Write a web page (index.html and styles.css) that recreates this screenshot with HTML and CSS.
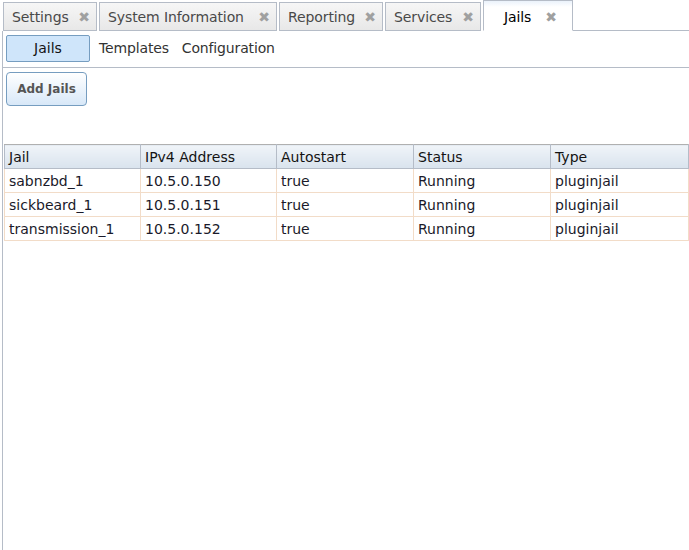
FILE: index.html
```html
<!DOCTYPE html>
<html>
<head>
<meta charset="utf-8">
<link rel="stylesheet" href="styles.css">
</head>
<body>
<div class="app">
  <div class="tabstrip">
    <div class="tab" style="width:94px"><span class="label">Settings</span><span class="close">✖</span></div>
    <div class="tab" style="width:178px"><span class="label">System Information</span><span class="close">✖</span></div>
    <div class="tab" style="width:104px"><span class="label">Reporting</span><span class="close">✖</span></div>
    <div class="tab" style="width:96px"><span class="label">Services</span><span class="close">✖</span></div>
    <div class="tab active" style="width:90px"><span class="label">Jails</span><span class="close">✖</span></div>
    <div class="strip-rest"></div>
  </div>
  <div class="pane">
    <div class="subbar">
      <button class="subtab selected">Jails</button>
      <span class="sublink">Templates</span>
      <span class="sublink">Configuration</span>
    </div>
    <div class="content">
      <button class="action">Add Jails</button>
      <table class="grid">
        <colgroup>
          <col style="width:136px"><col style="width:136px"><col style="width:137px"><col style="width:137px"><col>
        </colgroup>
        <thead>
          <tr><th>Jail</th><th>IPv4 Address</th><th>Autostart</th><th>Status</th><th>Type</th></tr>
        </thead>
        <tbody>
          <tr><td>sabnzbd_1</td><td>10.5.0.150</td><td>true</td><td>Running</td><td>pluginjail</td></tr>
          <tr><td>sickbeard_1</td><td>10.5.0.151</td><td>true</td><td>Running</td><td>pluginjail</td></tr>
          <tr><td>transmission_1</td><td>10.5.0.152</td><td>true</td><td>Running</td><td>pluginjail</td></tr>
        </tbody>
      </table>
    </div>
  </div>
</div>
</body>
</html>
```
FILE: styles.css
```css
* { box-sizing: border-box; }
html, body { margin: 0; padding: 0; background: #fff; }
body {
  font-family: "DejaVu Sans", Verdana, sans-serif;
  font-size: 13px;
  color: #131313;
  width: 689px;
  height: 550px;
  overflow: hidden;
}
.app { display: flex; flex-direction: column; height: 550px; }
.tabstrip {
  display: flex;
  align-items: flex-end;
  height: 31px;
  padding-left: 3px;
  gap: 2px;
}
.tab {
  height: 29px;
  border: 1px solid #b5bcc7;
  background: linear-gradient(#f6f6f6, #e8e8e8);
  display: flex;
  align-items: center;
  padding: 0 6px 0 8px;
  color: #494949;
  font-size: 14px;
  letter-spacing: -0.1px;
}
.tab .label { flex: 1; }
.tab .close {
  color: #a0a0a0;
  font-size: 14px;
  font-weight: bold;
  line-height: 1;
}
.tab.active {
  height: 31px;
  background: linear-gradient(#eaf2fb 0, #fff 6px);
  border-bottom-color: #fff;
  color: #000;
  padding: 2px 14px 0 20px;
}
.tab.active .label { flex: none; margin-right: 14px; }
.strip-rest {
  flex: 1;
  height: 1px;
  background: #b5bcc7;
  margin-left: -2px;
}
.pane {
  flex: 1;
  border-left: 1px solid #b5bcc7;
  margin-left: 2px;
}
.subbar {
  height: 37px;
  border-bottom: 1px solid #b5bcc7;
  display: flex;
  align-items: center;
  padding: 0 0 2px 3px;
  gap: 9px;
  font-size: 14px;
  letter-spacing: -0.15px;
}
.subtab {
  font: inherit;
  width: 84px;
  height: 27px;
  border: 1px solid #769dc0;
  border-radius: 2px;
  background: #cfe5fa;
  color: #131313;
  padding: 0;
}
.sublink { color: #333; margin-right: 4px; }
.content { padding: 4px 0 0 3px; }
.action {
  font: inherit;
  font-size: 12px;
  font-weight: bold;
  color: #555;
  width: 81px;
  height: 34px;
  border: 1px solid #769dc0;
  border-radius: 4px;
  background: linear-gradient(#fff, #d8e8f8);
  padding: 0;
  display: block;
}
.grid {
  margin-top: 38px;
  margin-left: -2px;
  width: 685px;
  border-collapse: collapse;
  table-layout: fixed;
  font-size: 14px;
}
.grid th {
  height: 24px;
  text-align: left;
  font-weight: normal;
  background: linear-gradient(#f0f4f9, #d9e3ed);
  border: 1px solid #b5bcc7;
  border-top-color: #b0b0b0;
  padding: 0 4px;
  color: #131313;
}
.grid td {
  height: 24px;
  border: 1px solid #f2dcc8;
  padding: 0 4px;
  color: #1a1a2a;
  white-space: nowrap;
  overflow: hidden;
}
```
